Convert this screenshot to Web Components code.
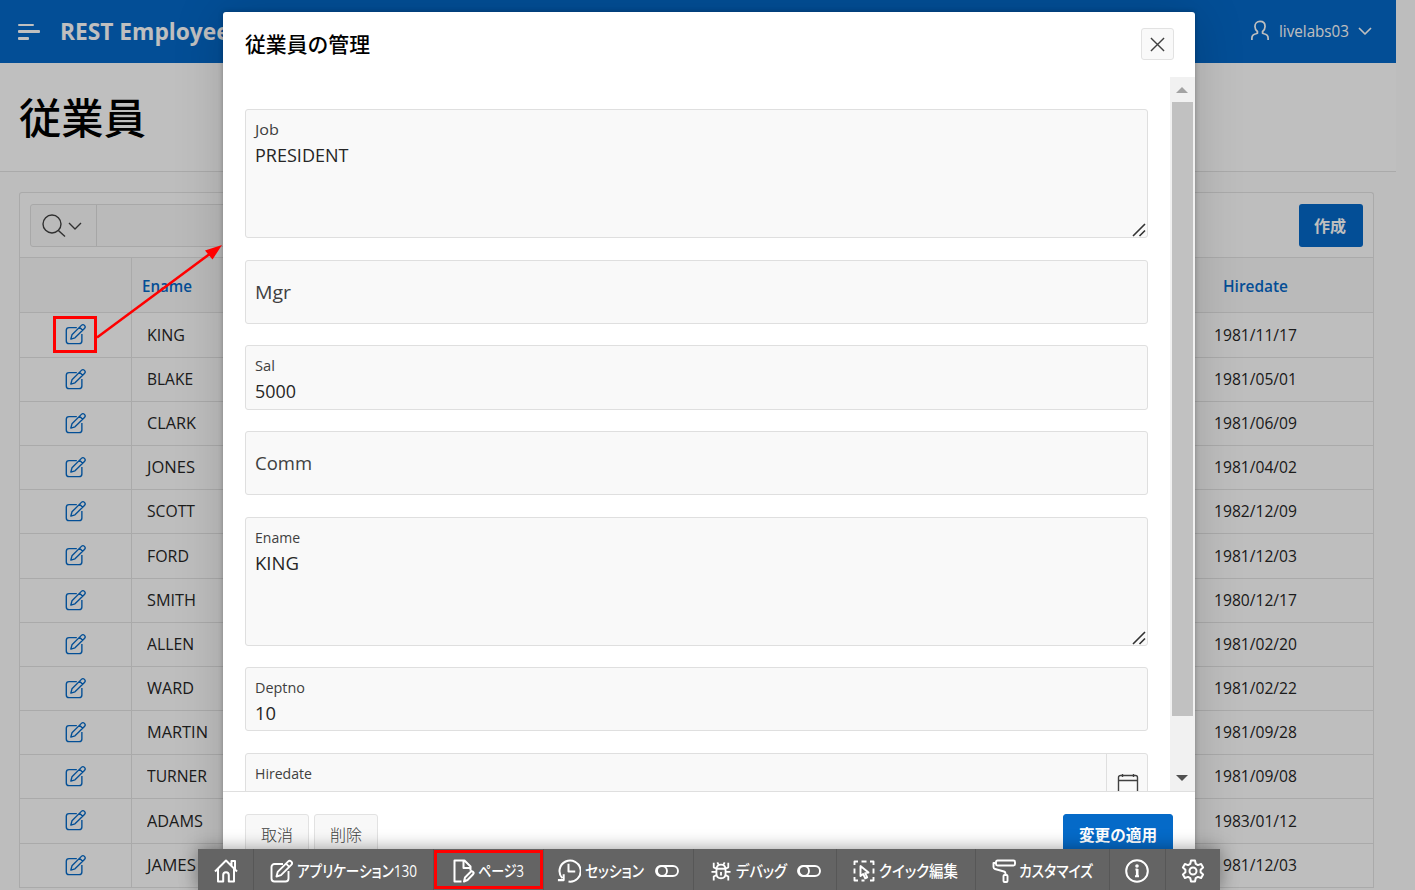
<!DOCTYPE html>
<html lang="ja">
<head>
<meta charset="utf-8">
<title>REST Employees</title>
<style>
html,body{margin:0;padding:0;width:1415px;height:890px;overflow:hidden;background:#fdfdfd;
font-family:"Open Sans","Noto Sans CJK JP",sans-serif}
</style>
</head>
<body>
<employee-app></employee-app>
<script>
const ICONS={
 edit:['0 0 24 24','<path d="M14 5H5.500A3 3 0 0 0 2.500 8v11.500a3 3 0 0 0 3 3h11a3 3 0 0 0 3-3V12"/><path d="m7.500 17.500 1.200-4.600L19 2.600a2.300 2.300 0 0 1 3.300 3.300L12 16.200zM17 4.600l3.300 3.300"/>'],
 search:['0 0 24 24','<circle cx="10" cy="10" r="9"/><path d="m16.400 16.400 6.600 6.100"/>'],
 chev:['0 0 14 8','<path d="m1 1 6 6 6-6"/>'],
 user:['0 0 20 22','<path d="M1.500 21v-2c0-2.500 1.700-4 4.300-4.600l1.500-.5V12C5.600 10.700 4.700 9 4.700 6.800 4.700 3.500 6.900 1.500 10 1.500s5.300 2 5.300 5.300c0 2.200-.9 3.900-2.600 5.200v1.900l1.500.5c2.600.6 4.300 2.100 4.300 4.600v2"/>'],
 close:['0 0 16 16','<path d="m1 1 14 14M15 1 1 15"/>'],
 cal:['0 0 22 22','<path d="M1.500 20V4.500a2 2 0 0 1 2-2h15a2 2 0 0 1 2 2V20zM1.500 7.500h19M5.500 1v3M16.500 1v3"/>'],
 home:['0 0 24 24','<path d="M1 12.500 12 1.500l11 11M4 10v12.500h5.200V16a2.800 2.800 0 0 1 5.600 0v6.500H20V10M17.500 6.500V2H21v8"/>'],
 page:['0 0 24 24','<path d="M9.500 22.500H2.500V1.500h10l6 6v4M11.500 1.500V9h7M12 22.500l1-4 5.500-5.500a1.700 1.700 0 0 1 2.600 2.300L15.500 21z"/>'],
 clock:['0 0 26 26','<path d="M6.500 21A11 11 0 1 1 13 24.500M2 23h6v-6M13 6v8h7"/>'],
 bug:['0 0 22 22','<path d="M6 9.500c0-3.500 2-5.500 5-5.500s5 2 5 5.500V14c0 3-2 5-5 5s-5-2-5-5zM6.500 8.500h9M11 12v4M6 12H.5M16 12h5.500M6 8.500 3 7V2M16 8.500 19 7V2M6 15.500 3 17v4.500M16 15.500l3 1.500v4.500M7 1.500l1.500 3M15 1.500l-1.500 3"/>'],
 toggle:['0 0 24 12','<rect x="1" y="1" width="22" height="10" rx="5"/><circle cx="7" cy="6" r="5"/>'],
 cursor:['0 0 22 22','<path d="M1.500 5V1.500H5M8.500 1.500h5M17 1.500h3.500V5M1.500 8.500v5M1.500 17v3.500H5M20.500 8.500v5M17 20.500h3.500V17M8.500 20.500h3M7.500 6v10l2.700-2 2 4.300 2-1-2-4.200 3.300-.5z"/>'],
 roller:['0 0 24 24','<path d="M4 4H1.500v4c0 1 .5 1.700 1.500 2l9 2.500c1 .3 1.500 1 1.500 2V16"/><rect x="4" y="1.500" width="19" height="5" rx="1.500"/><rect x="11.500" y="16" width="4" height="7" rx="1"/>'],
 info:['0 0 24 24','<circle cx="12" cy="12" r="10.800"/><path d="M10.500 10.500H12V17M10 17.200h4" /><path d="M12.200 10v7.500" stroke-width="2.600"/><circle cx="12" cy="7" r=".8" fill="currentColor"/>'],
 gear:['0 0 24 24','<circle cx="12" cy="12" r="3.500"/><path d="m10 1.500h4l.7 3.300 2.200 1.300 3.200-1.100 2 3.500-2.500 2.200v2.600l2.500 2.200-2 3.500-3.200-1.100-2.200 1.300-.7 3.300h-4l-.7-3.300-2.200-1.300L3.900 19l-2-3.500 2.500-2.200v-2.600L1.900 8.500l2-3.500 3.200 1.100 2.200-1.300z"/>'],
 resize:['0 0 14 14','<path d="M1 13 13 1M7.500 13 13 7.500"/>']
};
const define=(name,html,setup)=>{
  const t=document.createElement('template');t.innerHTML=html;
  customElements.define(name,class extends HTMLElement{
    connectedCallback(){
      if(this.shadowRoot)return;
      this.attachShadow({mode:'open'}).append(t.content.cloneNode(true));
      if(setup)setup(this,this.shadowRoot);
    }
  });
};

/* Icon: name, width, height and stroke width come from attributes */
define('ui-icon','<style>:host{display:block;flex:none}svg{display:block;width:100%;height:100%;fill:none;stroke:currentColor;stroke-linejoin:round}</style>',(el,r)=>{
  const [vb,body]=ICONS[el.getAttribute('name')];
  el.style.width=el.getAttribute('w')+'px';
  el.style.height=(el.getAttribute('h')||el.getAttribute('w'))+'px';
  r.innerHTML+=`<svg viewBox="${vb}" stroke-width="${el.getAttribute('s')||1.5}">${body}</svg>`;
});

/* Text condensed or widened to a given width */
define('ui-text','<style>:host{display:block;flex:none;white-space:nowrap}span{display:inline-block;transform-origin:0 50%;font-feature-settings:var(--feat,normal)}</style><span><slot></slot></span>',(el,r)=>{
  const s=r.querySelector('span'),w=+el.getAttribute('w');
  el.style.width=w+'px';
  s.style.transform=`scaleX(${w/s.getBoundingClientRect().width})`;
});

define('app-header',`<style>
:host{display:flex;align-items:center;height:63px;box-sizing:border-box;background:#0568c8;color:#fff;padding:0 24px 0 18px}
.burger{display:grid;width:22px;height:16px;align-content:space-between;margin-right:20px}
i{display:block;height:3px;border-radius:1px;background:#fff}
i:nth-child(1){width:16px;height:2px}i:nth-child(2){width:22px}i:nth-child(3){width:11px}
.t{font-size:23.500px;font-weight:700;margin-top:-2px}
.u{display:flex;align-items:center;margin-left:auto;font-size:15.500px}
</style><div class="burger"><i></i><i></i><i></i></div><ui-text class="t" w="181">REST Employees</ui-text>
<div class="u"><ui-icon name="user" w="20" h="21" s="1.800" style="margin:-2px 9px 0 0"></ui-icon><ui-text w="70" style="margin-top:-2px">livelabs03</ui-text><ui-icon name="chev" w="14" h="8" s="1.700" style="margin-left:9px;margin-top:-1px"></ui-icon></div>`);

define('page-title',`<style>:host{display:flex;align-items:center;height:109px;box-sizing:border-box;border-bottom:1px solid #e3e3e3;padding:2px 0 0 19px;background:#fff;color:#000;font-size:42px;font-weight:500;line-height:60px}</style><ui-text w="127"><slot></slot></ui-text>`);

define('employee-row',`<style>
:host{display:grid;grid-template-columns:112px 1fr 178px;border-bottom:1px solid #e3e3e3;box-sizing:border-box;align-items:stretch;font-size:15.500px;color:#262626}
div{display:flex;align-items:center}
.a{border-right:1px solid #e3e3e3;justify-content:center;color:#056ac8;box-sizing:border-box;padding:0 2px 2px 0}
.b{padding-left:15px}.c{padding-left:19px}
ui-text{margin-top:-1px}
</style><div class="a"><ui-icon name="edit" w="22" s="1.500"></ui-icon></div><div class="b"></div><div class="c"></div>`,(el,r)=>{
  const d=el.data;
  el.style.height=d[2]+'px';
  r.querySelector('.b').innerHTML=`<ui-text w="${d[1]}">${d[0]}</ui-text>`;
  r.querySelector('.c').innerHTML=`<ui-text w="83">${d[3]}</ui-text>`;
});

define('employee-report',`<style>
:host{display:block;margin:20px 22px 0 19px;border:1px solid #e3e3e3;border-bottom:0;border-radius:3px 3px 0 0;background:#fefefe}
.bar{display:flex;justify-content:space-between;height:65px;box-sizing:border-box;padding:11px 10px 0;border-bottom:1px solid #e3e3e3}
.s{display:flex;width:600px;height:43px;box-sizing:border-box;border:1px solid #e0e0e0;border-radius:3px;background:#f9f9f9}
.m{width:66px;box-sizing:border-box;display:flex;align-items:center;padding-left:11px;gap:2px;border-right:1px solid #dedede;color:#404040}
.new{display:flex;align-items:center;justify-content:center;width:64px;height:43px;background:#0568c8;color:#fff;border-radius:3px;font-size:16px;font-weight:700;box-sizing:border-box;padding:0 2px 2px 0}
.head{display:grid;grid-template-columns:112px 1fr 178px;height:55px;box-sizing:border-box;border-bottom:1px solid #e3e3e3;background:#f9f9f9;color:#0568c8;font-size:15.500px;font-weight:600;align-items:center}
.head i{height:100%;box-sizing:border-box;border-right:1px solid #e3e3e3}
.h1{margin-left:10px}.h2{margin-left:28px}
.head ui-text{margin-top:1px}
</style>
<div class="bar"><div class="s"><div class="m"><ui-icon name="search" w="24" s="1.400"></ui-icon><ui-icon name="chev" w="14" h="8" s="1.400"></ui-icon></div></div><div class="new"><ui-text w="32">作成</ui-text></div></div>
<div class="head"><i></i><ui-text class="h1" w="50">Ename</ui-text><ui-text class="h2" w="65">Hiredate</ui-text></div>
<div class="rows"></div>`,(el,r)=>{
 const rows=[['KING',38,45,'1981/11/17'],['BLAKE',46,44,'1981/05/01'],['CLARK',49,44,'1981/06/09'],['JONES',48,44,'1981/04/02'],['SCOTT',48,44,'1982/12/09'],['FORD',42,45,'1981/12/03'],['SMITH',49,44,'1980/12/17'],['ALLEN',47,44,'1981/02/20'],['WARD',47,44,'1981/02/22'],['MARTIN',61,44,'1981/09/28'],['TURNER',60,44,'1981/09/08'],['ADAMS',56,45,'1983/01/12'],['JAMES',49,44,'1981/12/03']];
 const box=r.querySelector('.rows');
 rows.forEach((d,i)=>{const e=document.createElement('employee-row');e.data=d;box.append(e)});
});

define('form-field',`<style>
:host{display:flex;flex:none;box-sizing:border-box;border:1px solid #dfdfdf;border-radius:3px;background:#f9f9f9;position:relative;color:#262626}
.in{flex:1;padding:9px 0 0 9px}
.l{font-size:14px;line-height:22px;color:#404040}
.v{font-size:18px;line-height:28px}
.in.empty{padding:0 0 0 9px;display:flex;align-items:center}
.empty .l{font-size:18px}
.g{position:absolute;right:1px;bottom:0;color:#333}
.d{width:41px;box-sizing:border-box;border-left:1px solid #dfdfdf;padding:19px 0 0 10px;color:#404040}
</style><div class="in"></div>`,(el,r)=>{
  const a=n=>el.getAttribute(n),box=r.querySelector('.in');
  if(a('kind')==='empty')box.classList.add('empty');
  el.style.height=a('h')+'px';
  box.innerHTML=`<ui-text class="l" w="${a('lw')}">${a('label')}</ui-text>`+(a('value')?`<ui-text class="v" w="${a('vw')}">${a('value')}</ui-text>`:'');
  const add=h=>r.append(document.createRange().createContextualFragment(h));
  if(a('kind')==='area')add('<ui-icon class="g" name="resize" w="14" s="1.600"></ui-icon>');
  if(a('kind')==='date')add('<div class="d"><ui-icon name="cal" w="22" s="1.400"></ui-icon></div>');
});

define('ui-button',`<style>
:host{display:flex;align-items:center;justify-content:center;box-sizing:border-box;width:64px;height:42px;padding-bottom:2px;border:1px solid #e2e2e2;border-radius:3px;background:#f8f8f8;color:#404040;font-size:16px;font-weight:300}
:host([hot]){width:110px;background:#056ac8;border-color:#056ac8;color:#fff;font-weight:700}
</style><slot></slot>`);

define('scroll-bar',`<style>
:host{display:flex;flex-direction:column;width:25px;background:#f1f1f1;align-items:center}
b{height:25px;display:flex;align-items:center;justify-content:center;padding-right:1px}
i{width:21px;height:614px;background:#c1c1c1;margin-right:1px}
.e{margin-top:auto;height:27px}
svg{display:block}
</style><b><svg width="12" height="6"><path d="M0 6 6 0l6 6z" fill="#a3a3a3"/></svg></b><i></i><b class="e"><svg width="12" height="6"><path d="M0 0h12L6 6z" fill="#505050"/></svg></b>`);

define('edit-dialog',`<style>
:host{position:absolute;left:223px;top:12px;width:972px;height:878px;display:flex;flex-direction:column;background:#fff;border-radius:3px 3px 0 0;box-shadow:0 2px 50px rgba(0,0,0,.17),0 0 5px rgba(0,0,0,.25)}
header{height:65px;flex:none;box-sizing:border-box;display:flex;justify-content:space-between;padding:16px 21px 0 22px}
.t{font-size:21px;font-weight:500;line-height:32px;color:#000}
.x{width:33px;height:32px;box-sizing:border-box;border:1px solid #e2e2e2;border-radius:3px;background:#f9f9f9;display:flex;align-items:center;justify-content:center;color:#404040}
.body{height:714px;flex:none;display:flex;overflow:hidden}
.f{flex:1;padding:32px 22px 0;display:flex;flex-direction:column;height:714px;box-sizing:border-box}
footer{flex:1;border-top:1px solid #dfdfdf;display:flex;align-items:flex-start;gap:5px;padding:22px 22px 0}
.sp{flex:1}
</style>
<header><ui-text class="t" w="125">従業員の管理</ui-text><div class="x"><ui-icon name="close" w="15" s="1.500"></ui-icon></div></header>
<div class="body"><div class="f">
<form-field kind="area" h="129" label="Job" lw="24" value="PRESIDENT" vw="93.500"></form-field>
<form-field kind="empty" h="64" label="Mgr" lw="36" style="margin-top:22px"></form-field>
<form-field h="65" label="Sal" lw="20" value="5000" vw="41" style="margin-top:21px"></form-field>
<form-field kind="empty" h="64" label="Comm" lw="57" style="margin-top:21px"></form-field>
<form-field kind="area" h="129" label="Ename" lw="45" value="KING" vw="44" style="margin-top:22px"></form-field>
<form-field h="64" label="Deptno" lw="50" value="10" vw="21" style="margin-top:21px"></form-field>
<form-field kind="date" h="64" label="Hiredate" lw="57" style="margin-top:22px"></form-field>
</div><scroll-bar></scroll-bar></div>
<footer><ui-button><ui-text w="32">取消</ui-text></ui-button><ui-button><ui-text w="32">削除</ui-text></ui-button><div class="sp"></div><ui-button hot><ui-text w="78">変更の適用</ui-text></ui-button></footer>`);

define('tool-item',`<style>
:host{display:flex;flex:none;align-items:center;box-sizing:border-box;height:41px;border-right:1px solid #575757;padding-top:2px}
:host(:last-child){border-right:0}
</style><slot></slot>`);

define('dev-toolbar',`<style>
:host{position:absolute;left:198px;top:849px;width:1022px;height:41px;display:flex;background:#646464;color:#fff;font-size:16px;font-weight:500;--feat:"palt";box-shadow:0 0 18px rgba(0,0,0,.4);line-height:24px}
</style>
<tool-item style="width:56px;padding-left:16px"><ui-icon name="home" w="24" s="2"></ui-icon></tool-item>
<tool-item style="width:180px;padding-left:15px"><ui-icon name="edit" w="24" s="1.900" style="margin-right:4px"></ui-icon><ui-text w="120">アプリケーション130</ui-text></tool-item>
<tool-item style="width:110px;padding-left:18px"><ui-icon name="page" w="24" s="2"></ui-icon><ui-text w="46" style="margin-left:2px">ページ3</ui-text></tool-item>
<tool-item style="width:150px;padding-left:12px"><ui-icon name="clock" w="25" s="2.100"></ui-icon><ui-text w="59" style="margin:0 11px 0 4px">セッション</ui-text><ui-icon name="toggle" w="24" h="12" s="1.900"></ui-icon></tool-item>
<tool-item style="width:143px;padding-left:17px"><ui-icon name="bug" w="20" s="2"></ui-icon><ui-text w="51" style="margin:0 10px 0 5px">デバッグ</ui-text><ui-icon name="toggle" w="24" h="12" s="1.900"></ui-icon></tool-item>
<tool-item style="width:139px;padding-left:16px"><ui-icon name="cursor" w="22" s="1.900"></ui-icon><ui-text w="79" style="margin-left:4px">クイック編集</ui-text></tool-item>
<tool-item style="width:134px;padding-left:16px"><ui-icon name="roller" w="24" s="1.900"></ui-icon><ui-text w="74" style="margin-left:3px">カスタマイズ</ui-text></tool-item>
<tool-item style="width:56px;padding-left:15px"><ui-icon name="info" w="24" s="2"></ui-icon></tool-item>
<tool-item style="width:54px;padding-left:15px"><ui-icon name="gear" w="24" s="2"></ui-icon></tool-item>`);

/* Red callouts drawn over the interface */
define('call-outs',`<style>:host{position:absolute;inset:0;pointer-events:none}svg{display:block}</style>
<svg width="1415" height="890" fill="none" stroke="#f00"><rect x="54.500" y="317.500" width="41" height="34" stroke-width="3"/><rect x="435.500" y="851.500" width="106" height="36" stroke-width="3"/><path d="M97 337.500 211 253" stroke-width="2.500"/><path d="M222 245 205 250.500l7.500 9z" fill="#f00" stroke="none"/></svg>`);

define('employee-app',`<style>
:host{display:block;position:relative;width:1415px;height:890px;overflow:hidden;background:#fdfdfd}
main{width:1396px}
.dim{position:absolute;inset:0;background:rgba(0,0,0,.25)}
</style>
<main><app-header></app-header><page-title>従業員</page-title><employee-report></employee-report></main>
<div class="dim"></div><edit-dialog></edit-dialog><dev-toolbar></dev-toolbar><call-outs></call-outs>`);
</script>
</body>
</html>
